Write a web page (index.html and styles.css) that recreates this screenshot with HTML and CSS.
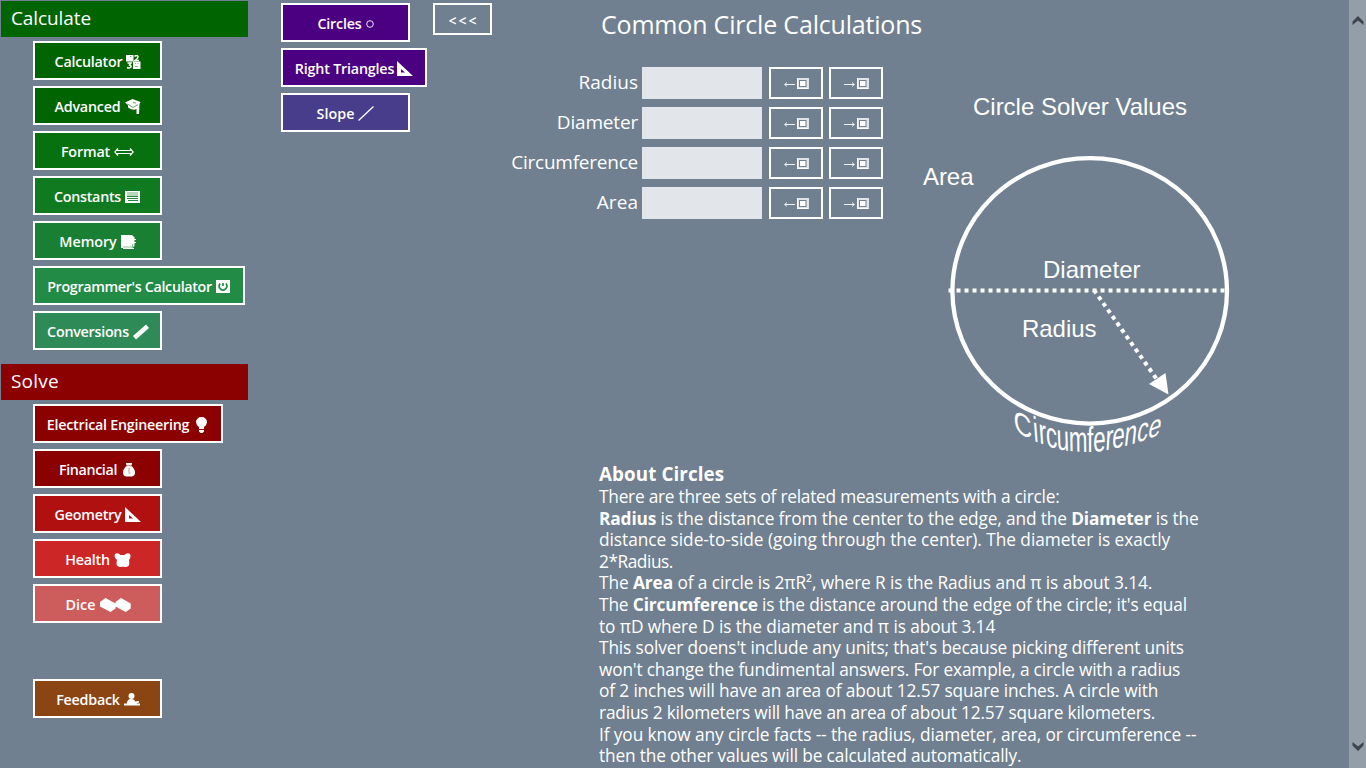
FILE: index.html
```html
<!DOCTYPE html>
<html lang="en">
<head>
<meta charset="utf-8">
<title>Common Circle Calculations</title>
<link rel="stylesheet" href="styles.css">
</head>
<body>
<div class="app">
  <nav class="sidebar">
    <h2 class="section calc">Calculate</h2>
    <div class="group">
      <button class="btn calculator"><span>Calculator</span><svg width="15" height="14" viewBox="0 0 15 14"><path d="M0 0h7.500v6.500H0zM7 6.500h7.500V14H7z" fill="#fff"/><path d="M8.500 1.500Q11-.500 12 1.500 12.500 3 9 5.500h4M1.500 8h3.500L3.500 10Q6 11 4.500 12.500 3 13.500 1 12.500" fill="none" stroke="#fff" stroke-width="1.500"/><path d="M4 1.500h1.500M9 8.500h1M11.500 8.500h1M9 11.500h3" stroke="#060" stroke-width=".5"/></svg></button>
      <button class="btn advanced"><span>Advanced</span><svg width="16" height="16" viewBox="0 0 16 16"><path d="M0 3.500L7.500 0 15.500 3 14.500 5 14 15h-2.500L11.500 10Q8 12 3 8.500V6z" fill="#fff"/><path d="M2.500 5L8 8.500l5-3M8 3.500l3 .5" fill="none" stroke="#060" stroke-width=".6"/></svg></button>
      <button class="btn format"><span>Format</span><svg width="20" height="10" viewBox="0 0 20 10"><path d="M4 1.500L.8 5 4 8.500M16 1.500L19.200 5 16 8.500M2.500 3.500h15M2.500 6.500h15" fill="none" stroke="#fff" stroke-width="1.200"/></svg></button>
      <button class="btn constants"><span>Constants</span><svg width="15" height="12" viewBox="0 0 15 12"><path d="M0 0h15v12H0z" fill="#fff"/><path d="M2 1h11v4H2z" fill="#b5d8b9"/><path d="M2 5.500h11M2 7.500h11M3 9.500h10" stroke="#0d7a22" stroke-width=".9"/></svg></button>
      <button class="btn memory"><span>Memory</span><svg width="15" height="14" viewBox="0 0 15 14"><path d="M0 0h11l2.500 2.500V11L11 13H0z" fill="#fff"/><path d="M11 4.500h4M11 7.500h4M2 13.500h11" stroke="#fff"/><path d="M2 12h9.500V9" fill="none" stroke="#198033" stroke-width=".5"/></svg></button>
      <button class="btn programmer"><span>Programmer's Calculator</span><svg width="14" height="13" viewBox="0 0 14 13"><path d="M0 0h14v13H0z" fill="#fff"/><path d="M4 3.500a3.800 4 0 1 0 6 0M7 3v3" fill="none" stroke="#228b45" stroke-width="1.700"/></svg></button>
      <button class="btn conversions"><span>Conversions</span><svg width="16" height="16" viewBox="0 0 16 16"><path d="M0 12L13 .5 16 4 3 15.500z" fill="#fff"/></svg></button>
    </div>
    <h2 class="section solve">Solve</h2>
    <div class="group">
      <button class="btn electrical"><span>Electrical Engineering</span><svg width="11" height="16" viewBox="0 0 11 16"><path d="M3 10Q0 7.500 0 5a5.500 5 0 0 1 11 0Q11 7.500 8 10v2H3zM3 13h5v1.500L6.500 16h-2L3 14.500z" fill="#fff"/></svg></button>
      <button class="btn financial"><span>Financial</span><svg width="12" height="14" viewBox="0 0 12 14"><path d="M3 0h6L8.500 3Q12 6 12 9.500 12 13 9 13.500H3Q0 13 0 9.500 0 6 3.500 3z" fill="#fff"/><path d="M3 2.700h6M5.200 6h2M5 8h1.500M5.500 10h2" stroke="#8b0000" stroke-width=".5"/></svg></button>
      <button class="btn geometry"><span>Geometry</span><svg width="16" height="15" viewBox="0 0 16 15"><path d="M0 0l16 15H0zM4 8v3.500h4z" fill="#fff" fill-rule="evenodd"/></svg></button>
      <button class="btn health"><span>Health</span><svg width="17" height="14" viewBox="0 0 17 14"><path d="M1 1Q4-1 6.500 2h4Q13-1 16 1q1.500 2.500-1 6 .5 3 0 5.500-3 2.500-6 1-3 1.500-6-1-1-2.500 0-5.500Q-.5 4 1 1z" fill="#fff"/></svg></button>
      <button class="btn dice"><span>Dice</span><svg width="31" height="14" viewBox="0 0 31 14"><path d="M0 4L5.500 0 15.500 5.500v5l-5 3.500L0 8.500zM15.500 4L21 0l9.700 5.500v5l-5 3.500-10.200-5.500z" fill="#fff"/></svg></button>
    </div>
    <div class="group footer">
      <button class="btn feedback"><span>Feedback</span><svg width="16" height="13" viewBox="0 0 16 13"><circle cx="7.500" cy="3" r="3" fill="#fff"/><path d="M3 10.500Q3 6 7 6t4 2.500l4-.5v1.500L12 10.500h4V12.500H0v-2z" fill="#fff"/></svg></button>
    </div>
  </nav>

  <nav class="topics">
    <button class="btn circles"><span>Circles</span><svg width="8" height="8" viewBox="0 0 8 8"><circle cx="4" cy="4" r="3.300" fill="none" stroke="#fff" stroke-width=".9"/></svg></button>
    <button class="btn triangles"><span>Right Triangles</span><svg width="16" height="15" viewBox="0 0 16 15"><path d="M0 0l16 15H0zM4 8v3.500h4z" fill="#fff" fill-rule="evenodd"/></svg></button>
    <button class="btn slope"><span>Slope</span><svg width="16" height="15" viewBox="0 0 16 15"><path d="M.5 14.500L15.500 .5" stroke="#fff" stroke-width="1.300"/></svg></button>
  </nav>

  <svg class="defs" width="0" height="0">
    <symbol id="box" viewBox="0 0 12 11"><path d="M0 0h12v11H0zM2 2v7h7.500V2z" fill="#e0e4e8" fill-rule="evenodd"/><path d="M0 10.500h11M.5 0v11" fill="none" stroke="#fff"/><path d="M3 3h5.500v5H3z" fill="#fff"/></symbol>
    <symbol id="left" viewBox="0 0 25 12"><path d="M.7 6.500H11M3 4.500l-2.300 2L3 8.500" fill="none" stroke="#fff" stroke-width=".9"/><use href="#box" x="13" y="0" width="12" height="11"/></symbol>
    <symbol id="right" viewBox="0 0 25 12"><path d="M0 6.500h10.300M8 4.500l2.300 2L8 8.500" fill="none" stroke="#fff" stroke-width=".9"/><use href="#box" x="13" y="0" width="12" height="11"/></symbol>
  </svg>

  <main class="content">
    <header class="top">
      <button class="collapse">&lt;&lt;&lt;</button>
      <h1>Common Circle Calculations</h1>
    </header>
    <div class="solver">
      <form class="fields">
        <label class="l-radius" for="radius">Radius</label><input id="radius"><button type="button" class="io"><svg width="25" height="12"><use href="#left"/></svg></button><button type="button" class="io"><svg width="25" height="12"><use href="#right"/></svg></button>
        <label class="l-diameter" for="diameter">Diameter</label><input id="diameter"><button type="button" class="io"><svg width="25" height="12"><use href="#left"/></svg></button><button type="button" class="io"><svg width="25" height="12"><use href="#right"/></svg></button>
        <label class="l-circumference" for="circumference">Circumference</label><input id="circumference"><button type="button" class="io"><svg width="25" height="12"><use href="#left"/></svg></button><button type="button" class="io"><svg width="25" height="12"><use href="#right"/></svg></button>
        <label class="l-area" for="area">Area</label><input id="area"><button type="button" class="io"><svg width="25" height="12"><use href="#left"/></svg></button><button type="button" class="io"><svg width="25" height="12"><use href="#right"/></svg></button>
      </form>
      <svg class="diagram" width="330" height="393" viewBox="910 67 330 393">
        <ellipse cx="1089.700" cy="290.900" rx="137.300" ry="132.700" fill="none" stroke="#fff" stroke-width="4.300"/>
        <path d="M948.500 290.500H1229" stroke="#fff" stroke-width="4" stroke-dasharray="4 4"/>
        <path d="M1094 290L1158 381" stroke="#fff" stroke-width="4" stroke-dasharray="4 4"/>
        <path d="M1165.500 373l3 21.500-19.500-10.500z" fill="#fff"/>
        <g class="names">
          <text x="973" y="115" textLength="214">Circle Solver Values</text>
          <text x="923" y="185" textLength="50.500">Area</text>
          <text x="1043" y="278" textLength="97.500">Diameter</text>
          <text x="1022" y="337" textLength="74.500">Radius</text>
        </g>
        <g class="arc">
          <text transform="matrix(1.050 .52 .1 1.320 1014.500 431)">C</text>
          <text transform="matrix(.95 .34 .12 1.500 1034 441)">i</text>
          <text transform="matrix(.95 .3 .1 1.500 1039.500 443)">r</text>
          <text transform="matrix(.93 .24 .08 1.500 1046.500 446)">c</text>
          <text transform="matrix(.93 .16 .05 1.500 1057 449)">u</text>
          <text transform="matrix(.93 .06 .02 1.500 1069 451)">m</text>
          <text transform="matrix(.95 0 0 1.500 1087 452)">f</text>
          <text transform="matrix(.93 -.1 -.03 1.500 1093 452)">e</text>
          <text transform="matrix(.95 -.17 -.08 1.500 1105 450.500)">r</text>
          <text transform="matrix(.93 -.2 -.12 1.500 1111.500 449)">e</text>
          <text transform="matrix(.93 -.26 -.16 1.450 1123.500 446.500)">n</text>
          <text transform="matrix(.93 -.32 -.2 1.400 1136 443)">c</text>
          <text transform="matrix(.95 -.38 -.25 1.350 1147 439.500)">e</text>
        </g>
      </svg>
    </div>
    <article class="about">
      <h3>About Circles</h3>
      <p>There are three sets of related measurements with a circle:</p>
      <p><b>Radius</b> is the distance from the center to the edge, and the <b>Diameter</b> is the</p>
      <p>distance side-to-side (going through the center). The diameter is exactly</p>
      <p>2*Radius.</p>
      <p>The <b>Area</b> of a circle is 2πR², where R is the Radius and π is about 3.14.</p>
      <p>The <b>Circumference</b> is the distance around the edge of the circle; it's equal</p>
      <p>to πD where D is the diameter and π is about 3.14</p>
      <p>This solver doens't include any units; that's because picking different units</p>
      <p>won't change the fundimental answers. For example, a circle with a radius</p>
      <p>of 2 inches will have an area of about 12.57 square inches. A circle with</p>
      <p>radius 2 kilometers will have an area of about 12.57 square kilometers.</p>
      <p>If you know any circle facts -- the radius, diameter, area, or circumference --</p>
      <p>then the other values will be calculated automatically.</p>
    </article>
  </main>

  <div class="scrollbar">
    <svg width="12" height="10" viewBox="0 0 12 10"><path d="M.5 9V5.500L6 0l5.500 5.500V9L6 4.500z" fill="#3e444a"/></svg>
    <svg width="12" height="10" viewBox="0 0 12 10"><path d="M.5 1v3.500L6 10l5.500-5.500V1L6 5.500z" fill="#3e444a"/></svg>
  </div>
</div>
</body>
</html>
```
FILE: styles.css
```css
* { box-sizing: border-box; }
body { margin: 0; height: 768px; overflow: hidden; background: #708090; color: #fff; font-family: "Open Sans", "Noto Sans", sans-serif; }
h1, h2, h3, p { margin: 0; font-weight: 400; }
button { border: 2px solid #fff; border-radius: 0; background: none; color: #fff; display: flex; align-items: center; justify-content: center; }
svg { display: block; flex: none; }
.defs { position: absolute; }

.app { display: flex; height: 768px; }
.sidebar { flex: none; width: 248px; padding: 1px 0 0 1px; }
.section { height: 36px; padding-left: 10px; font-size: 19px; line-height: 34px; }
.calc { background: #006400; letter-spacing: -.1px; }
.solve { background: #8b0000; margin-top: 14px; letter-spacing: .2px; }
.group { display: flex; flex-direction: column; align-items: flex-start; gap: 6px; padding: 4px 0 0 32px; }
.footer { padding-top: 56px; }

.btn { min-width: 129px; height: 39px; padding: 2px 0 0; gap: 4px; font: 600 14.3px "Open Sans", sans-serif; white-space: nowrap; }
.calculator { background: #006400; letter-spacing: -.26px; padding-left: 1px; }
.advanced { background: #006400; letter-spacing: -.18px; }
.format { background: #07700f; letter-spacing: -.15px; }
.constants { background: #0f7a20; letter-spacing: -.27px; padding-right: 1px; }
.memory { background: #198033; letter-spacing: -.05px; }
.programmer { background: #228b45; letter-spacing: -.33px; min-width: 212px; padding-right: 1px; }
.conversions { background: #2e8b57; letter-spacing: -.26px; padding-left: 1px; }
.electrical { background: #8b0000; letter-spacing: -.25px; min-width: 190px; padding-right: 2px; gap: 7px; }
.financial { background: #8b0000; letter-spacing: -.38px; padding-right: 1px; gap: 6px; }
.geometry { background: #b01010; letter-spacing: -.2px; gap: 3px; }
.health { background: #cd2626; letter-spacing: -.25px; padding-left: 1px; }
.dice { background: #cd5c5c; letter-spacing: .1px; padding-left: 1px; }
.feedback { background: #8b4513; letter-spacing: -.25px; padding-left: 1px; }
.circles { background: #4b0082; letter-spacing: -.2px; }
.triangles { background: #4b0082; letter-spacing: -.19px; min-width: 146px; gap: 3px; }
.slope { background: #483d8b; letter-spacing: .05px; }

.topics { flex: none; width: 179px; padding: 3px 0 0 33px; display: flex; flex-direction: column; gap: 6px; align-items: flex-start; }

.content { flex: 1; padding: 3px 0 0 6px; }
.top { display: flex; height: 64px; }
.collapse { width: 59px; height: 32px; font: 600 14px "Open Sans", sans-serif; letter-spacing: 2px; padding: 2px 0 0 2px; }
h1 { margin-left: 109px; font-size: 25px; line-height: 42px; letter-spacing: -.19px; }
.solver { display: flex; }
.fields { flex: none; width: 477px; height: 393px; padding-left: 1px; display: grid; grid-template-columns: 204px 120px 54px 54px; grid-auto-rows: 32px; row-gap: 8px; column-gap: 0; font-size: 19px; align-content: start; }
.fields label { text-align: right; line-height: 30px; }
.fields input { width: 120px; height: 32px; border: 0; padding: 0; margin-left: 4px; background: #e2e5e9; }
.io { width: 54px; height: 32px; padding: 2px 0 0; margin-left: 11px; }
.io + .io { margin-left: 17px; }
.l-diameter { letter-spacing: -.18px; }
.l-circumference { letter-spacing: -.23px; }
.l-area { letter-spacing: .05px; }
.diagram text { fill: #fff; font-family: "Liberation Sans", Arial, sans-serif; font-size: 24px; }

.about { height: 308px; overflow: hidden; padding-left: 166px; font-size: 17.300px; line-height: 21.600px; white-space: nowrap; }
.about h3 { height: 26px; line-height: 28px; font-size: 18.800px; font-weight: 700; letter-spacing: .1px; }
.about b { font-weight: 700; }
.about p { height: 21.600px; }
.about p:nth-of-type(1) { letter-spacing: -.24px; }
.about p:nth-of-type(2) { letter-spacing: -.127px; }
.about p:nth-of-type(3) { letter-spacing: -.045px; }
.about p:nth-of-type(4) { letter-spacing: -.45px; }
.about p:nth-of-type(5) { letter-spacing: -.09px; }
.about p:nth-of-type(6) { letter-spacing: -.138px; }
.about p:nth-of-type(7) { letter-spacing: -.1px; }
.about p:nth-of-type(8) { letter-spacing: -.13px; }
.about p:nth-of-type(9) { letter-spacing: -.178px; }
.about p:nth-of-type(10) { letter-spacing: -.135px; }
.about p:nth-of-type(11) { letter-spacing: -.18px; }
.about p:nth-of-type(12) { letter-spacing: -.105px; }
.about p:nth-of-type(13) { letter-spacing: -.155px; }

.scrollbar { flex: none; width: 17px; background: #949ea8; display: flex; flex-direction: column; justify-content: space-between; align-items: center; padding: 16px 0 17px; }
```
